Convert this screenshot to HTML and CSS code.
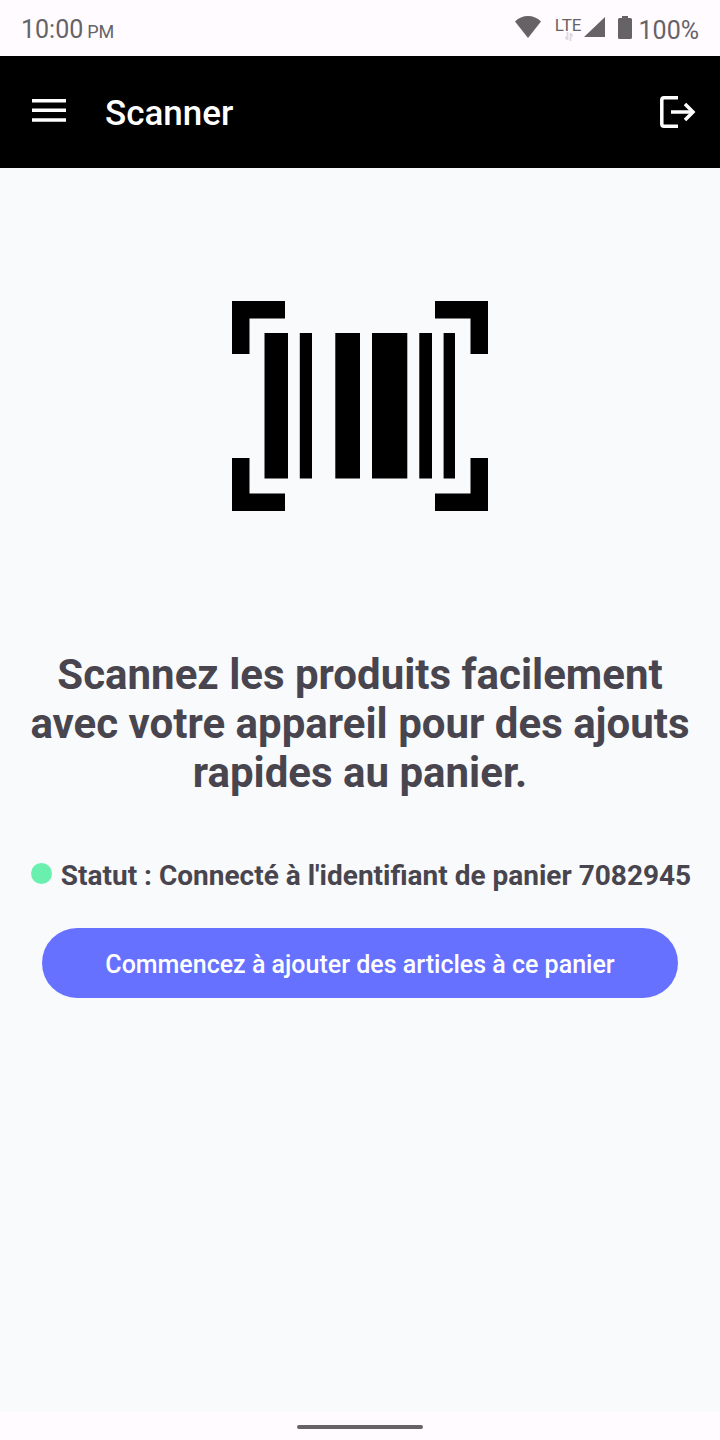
FILE: index.html
```html
<!DOCTYPE html>
<html lang="fr">
<head>
<meta charset="utf-8">
<meta name="viewport" content="width=device-width, initial-scale=1">
<title>Scanner</title>
<link rel="stylesheet" href="styles.css">
</head>
<body class="screen">
  <div class="statusbar">
    <div class="clock"><span>10:00</span><span class="clock-period">PM</span></div>
    <div class="indicators">
      <svg class="wifi" width="26" height="22" viewBox="0 0 26 22" aria-hidden="true"><path d="M13 22 0 5.500Q5.500 0 13 0T26 5.500Z" fill="currentColor"/></svg>
      <div class="network">
        <span class="network-type">LTE</span>
        <svg class="traffic" width="8" height="9" viewBox="0 0 8 9" aria-hidden="true"><path d="M2.500 0v8M0 5l2.500 2.500M5.500 9V1M5.500 1.500 8 4" fill="none" stroke="#ddd8dd" stroke-width="1.800"/></svg>
      </div>
      <svg class="signal" width="21" height="20" viewBox="0 0 21 20" aria-hidden="true"><path d="M0 20 21 0V20Z" fill="currentColor"/></svg>
      <svg class="battery" width="14" height="23" viewBox="0 0 14 23" aria-hidden="true"><path d="M4 0h6v2h2.500Q14 2 14 3.500v18q0 1.500-1.500 1.500h-11Q0 23 0 21.500v-18Q0 2 1.500 2H4Z" fill="currentColor"/></svg>
      <span class="battery-level">100%</span>
    </div>
  </div>

  <header class="appbar">
    <button class="icon-button" type="button" aria-label="Menu">
      <svg class="menu-icon" width="34" height="24" viewBox="0 0 34 24" aria-hidden="true"><path d="M0 2.700h34M0 12.300h34M0 22h34" stroke="#fff" stroke-width="3.400"/></svg>
    </button>
    <h1 class="title">Scanner</h1>
    <button class="icon-button logout" type="button" aria-label="Se déconnecter">
      <svg width="36" height="32" viewBox="0 0 36 32" fill="none" stroke="#fff" stroke-width="3.500" aria-hidden="true"><path d="M18 1.800H4Q1.800 1.800 1.800 4v24q0 2.200 2.200 2.200h14M11 16h21"/><path d="m25 8 8 8-8 8"/></svg>
    </button>
  </header>

  <main class="content">
    <svg class="barcode" width="256" height="210" viewBox="0 0 256 210" role="img" aria-label="Code-barres">
      <path d="M0 0h53v17.500H17.500V53H0ZM203 0h53v53h-17.500V17.500H203ZM0 157h17.500v35.500H53V210H0ZM238.500 157H256v53h-53v-17.500h35.500Z"/>
      <path d="M32.500 32H56v145.500H32.500ZM67.800 32H80v145.500H67.800ZM103.300 32H128v145.500h-24.700ZM140 32h35.300v145.500H140ZM187.300 32H200v145.500h-12.700ZM211.600 32H223v145.500h-11.400Z"/>
    </svg>
    <h2 class="headline">Scannez les produits facilement avec votre appareil pour des ajouts rapides au panier.</h2>
    <p class="status"><span class="status-dot"></span>Statut : Connecté à l'identifiant de panier 7082945</p>
    <button class="primary" type="button">Commencez à ajouter des articles à ce panier</button>
  </main>

  <div class="navbar"><span class="handle"></span></div>
</body>
</html>
```
FILE: styles.css
```css
* {
  box-sizing: border-box;
}

.screen {
  margin: 0;
  min-height: 100vh;
  display: flex;
  flex-direction: column;
  background: #fffbff;
  color: #49454f;
  font-family: Roboto, "Noto Sans", sans-serif;
}

.screen svg {
  display: block;
}

.statusbar {
  height: 56px;
  padding: 4px 21px 0;
  display: flex;
  align-items: center;
  justify-content: space-between;
  color: #666367;
  font-size: 25px;
  line-height: 32px;
}

.clock {
  display: flex;
  align-items: baseline;
  gap: 4px;
  padding-top: 2px;
}

.clock-period {
  font-size: 18px;
}

.battery-level {
  padding-top: 2px;
}

.indicators {
  display: flex;
  align-items: center;
}

.wifi {
  margin: 0 14px 6px 0;
}

.network {
  position: relative;
  margin: 0 2px 10px 0;
  font-size: 17px;
  line-height: 20px;
}

.traffic {
  position: absolute;
  top: 17px;
  left: 10px;
}

.signal {
  margin: 0 13px 6px 0;
}

.battery {
  margin: 0 7px 6px 0;
}

.appbar {
  height: 112px;
  padding: 0 24px 0 32px;
  display: flex;
  align-items: center;
  gap: 39px;
  background: #000;
  color: #fff;
}

.icon-button {
  padding: 0;
  border: 0;
  background: none;
}

.menu-icon {
  margin-bottom: 4px;
}

.title {
  margin: 0;
  padding-top: 3px;
  flex: 1;
  font-size: 35px;
  font-weight: 500;
  line-height: 42px;
}

.content {
  flex: 1;
  padding: 133px 21px 42px;
  display: flex;
  flex-direction: column;
  align-items: center;
  background: #f8fafc;
}

.headline {
  margin: 139px 0 0;
  font-size: 42px;
  font-weight: 700;
  line-height: 49px;
  text-align: center;
}

.status {
  margin: 61px 0 0;
  padding-left: 2px;
  display: flex;
  align-items: center;
  gap: 9px;
  font-size: 28px;
  font-weight: 700;
  line-height: 35px;
}

.status-dot {
  flex: none;
  width: 21px;
  height: 21px;
  margin-bottom: 4px;
  border-radius: 50%;
  background: #69f0ae;
}

.primary {
  align-self: stretch;
  min-height: 70px;
  margin: 35px 21px 0;
  padding: 2px 24px 0;
  border: 0;
  border-radius: 35px;
  background: #6672ff;
  color: #fff;
  font-family: inherit;
  font-size: 25px;
  font-weight: 500;
  line-height: 35px;
}

.navbar {
  height: 28px;
  display: flex;
  justify-content: center;
  align-items: center;
  padding-top: 2px;
}

.handle {
  width: 126px;
  height: 4px;
  border-radius: 2px;
  background: #666367;
}
```
